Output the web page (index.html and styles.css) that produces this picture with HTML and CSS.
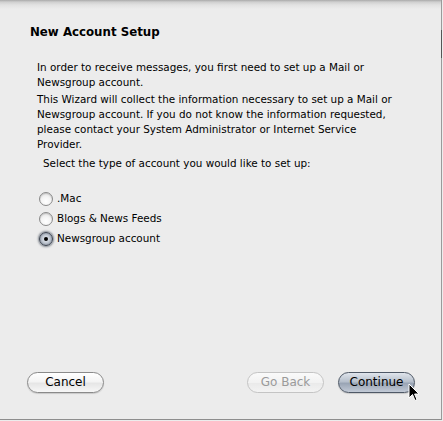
FILE: index.html
```html
<!DOCTYPE html>
<html>
<head>
<meta charset="utf-8">
<link rel="stylesheet" href="styles.css">
</head>
<body>
<div class="sheet">
  <div class="content">
    <h1 class="title">New Account Setup</h1>
    <div class="intro">
      <p>In order to receive messages, you first need to set up a Mail or Newsgroup account.</p>
      <p>This Wizard will collect the information necessary to set up a Mail or Newsgroup account. If you do not know the information requested, please contact your System Administrator or Internet Service Provider.</p>
    </div>
    <p class="prompt">Select the type of account you would like to set up:</p>
    <div class="radios">
      <label class="radio"><span class="dot"></span>.Mac</label>
      <label class="radio"><span class="dot"></span>Blogs &amp; News Feeds</label>
      <label class="radio checked"><span class="dot"></span>Newsgroup account</label>
    </div>
  </div>
  <div class="buttons">
    <button class="btn">Cancel</button>
    <div class="right">
      <button class="btn disabled">Go Back</button>
      <button class="btn default">Continue</button>
    </div>
  </div>
  <div class="scrollmark"></div>
  <svg class="cursor" width="12" height="19" viewBox="0 0 12 19">
    <path d="M1 1 L1 15 L4.5 11.5 L7 17.5 L9 16.6 L6.6 11 L11 11 Z" fill="#000" stroke="#fff" stroke-width="1"/>
  </svg>
</div>
</body>
</html>
```
FILE: styles.css
```css
html, body {
  margin: 0;
  padding: 0;
  background: #ececec;
}
body {
  width: 443px;
  height: 421px;
  overflow: hidden;
  font-family: "DejaVu Sans", "Lucida Grande", sans-serif;
  color: #000;
}
.sheet {
  position: relative;
  box-sizing: border-box;
  width: 442px;
  height: 420px;
  border-right: 1px solid #9a9a9a;
  border-bottom: 1px solid #8e8e8e;
  background: linear-gradient(to bottom, #a9a9a9 0px, #cfcfcf 2px, #e2e2e2 5px, #ececec 9px, #ececec 100%);
  display: flex;
  flex-direction: column;
}
.content {
  padding: 24px 0 0 30px;
  flex: 1;
}
.title {
  margin: 0;
  font-size: 11.8px;
  font-weight: bold;
  line-height: 16px;
}
.intro {
  margin: 20px 0 0 7px;
  width: 356px;
  font-size: 10.4px;
  line-height: 15px;
}
.intro p {
  margin: 0 0 2px 0;
}
.prompt {
  margin: 4px 0 0 13px;
  font-size: 10.4px;
  line-height: 15px;
}
.radios {
  margin: 20px 0 0 9px;
  display: flex;
  flex-direction: column;
  gap: 5px;
}
.radio {
  display: flex;
  align-items: center;
  font-size: 10.4px;
  line-height: 15px;
  height: 15px;
}
.dot {
  box-sizing: border-box;
  width: 14px;
  height: 14px;
  border-radius: 50%;
  border: 1px solid #8a8a8a;
  background: radial-gradient(circle at 50% 70%, #ffffff 0, #f4f4f4 45%, #d6d6d6 100%);
  box-shadow: inset 0 1px 1px rgba(0,0,0,0.15);
  margin-right: 4px;
  position: relative;
}
.checked .dot {
  border-color: #3d4450;
  background: radial-gradient(circle at 50% 50%, #e9edf2 0, #c3cad4 45%, #6c7584 100%);
  box-shadow: 0 0 2px 1px rgba(60,70,85,0.6);
}
.checked .dot::after {
  content: "";
  position: absolute;
  left: 4px;
  top: 4px;
  width: 4px;
  height: 4px;
  border-radius: 50%;
  background: #000;
}
.buttons {
  display: flex;
  justify-content: space-between;
  padding: 0 26px 26px 27px;
}
.right {
  display: flex;
  gap: 14px;
}
.btn {
  box-sizing: border-box;
  width: 77px;
  height: 21px;
  border-radius: 11px;
  border: 1px solid #8a8a8a;
  background: linear-gradient(to bottom, #ffffff 0%, #f4f4f4 45%, #e6e6e6 55%, #f7f7f7 100%);
  box-shadow: 0 1px 1px rgba(0,0,0,0.15);
  font-family: "DejaVu Sans", "Lucida Grande", sans-serif;
  font-size: 12px;
  color: #000;
  padding: 0;
  line-height: 19px;
}
.btn.disabled {
  border-color: #c4c4c4;
  color: #9a9a9a;
  box-shadow: none;
  background: linear-gradient(to bottom, #fafafa 0%, #f2f2f2 50%, #eaeaea 55%, #f3f3f3 100%);
}
.btn.default {
  border-color: #4e5866;
  background: linear-gradient(to bottom, #e0e5ec 0%, #b7c0cc 45%, #9aa5b5 55%, #c2cad6 100%);
}
.scrollmark {
  position: absolute;
  right: -1px;
  top: 30px;
  width: 1px;
  height: 28px;
  background: #555;
}
.cursor {
  position: absolute;
  left: 408px;
  top: 383px;
}
```
